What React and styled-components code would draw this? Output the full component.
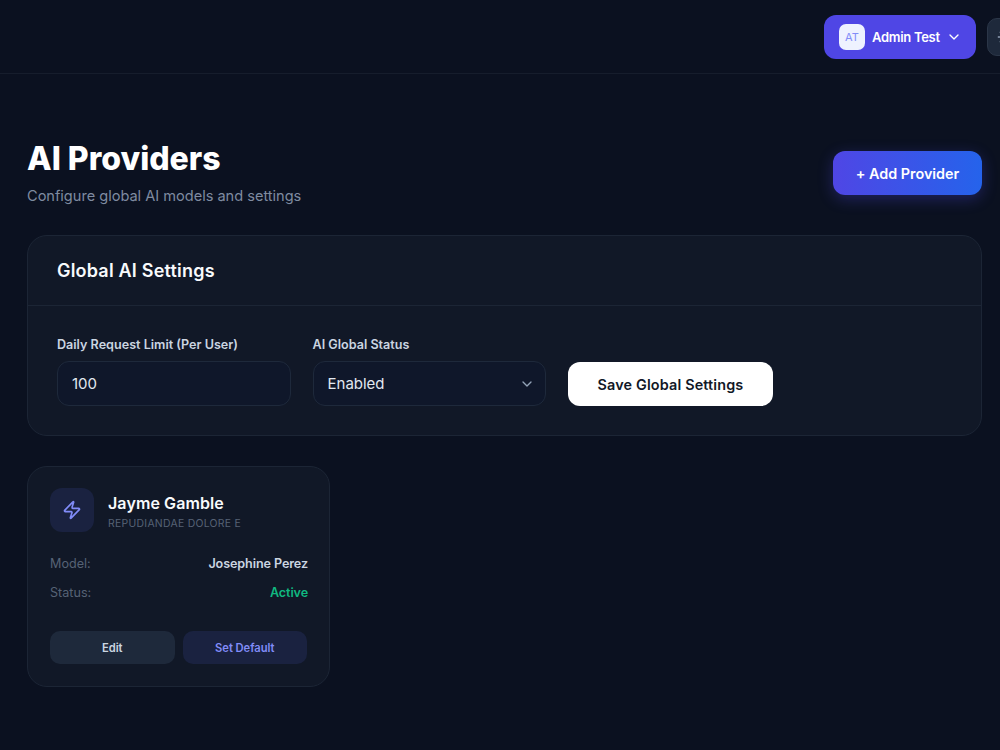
import React from "react";
import styled, { createGlobalStyle } from "styled-components";
import { ChevronDown, Zap, Sun } from "lucide-react";

const Global = createGlobalStyle`
  html, body { margin: 0; padding: 0; height: 750px; overflow: hidden; background: #0b1120; }
  * { box-sizing: border-box; }
  body { font-family: Inter, "Open Sans", "Liberation Sans", sans-serif; color: #fff; }
`;

const Page = styled.div`
  width: 1000px;
  height: 750px;
  overflow: hidden;
`;

const TopBar = styled.header`
  height: 74px;
  border-bottom: 1px solid #161d2c;
  display: flex;
  align-items: center;
  justify-content: flex-end;
  gap: 11px;
  margin-right: -40px;
`;

const UserButton = styled.button`
  width: 152px;
  height: 44px;
  background: #4f46e5;
  border: 0;
  border-radius: 12px;
  display: flex;
  align-items: center;
  padding: 0 15px;
  color: #fff;
  font: 600 13px Inter, sans-serif;
  letter-spacing: -0.3px;
  white-space: nowrap;
`;

const Avatar = styled.span`
  width: 26px;
  height: 26px;
  border-radius: 7px;
  background: #eef2ff;
  color: #818cf8;
  font-size: 11px;
  font-weight: 400;
  letter-spacing: 0;
  display: grid;
  place-items: center;
  margin-right: 7px;
  flex: none;
`;

const UserChevron = styled(ChevronDown)`
  margin-left: 6px;
  flex: none;
`;

const IconButton = styled.button`
  width: 53px;
  height: 38px;
  flex: none;
  background: #1e293b;
  border: 1px solid #2b3648;
  border-radius: 10px;
  color: #94a3b8;
  padding: 0 0 0 9px;
  display: flex;
  align-items: center;
`;

const Main = styled.main`
  padding: 62px 18px 0 27px;
`;

const Head = styled.div`
  display: flex;
  justify-content: space-between;
  align-items: flex-start;
  margin-bottom: 28px;
`;

const Title = styled.h1`
  margin: 0;
  font-size: 32px;
  line-height: 46px;
  font-weight: 800;
  color: #fff;
  letter-spacing: 0;
`;

const Subtitle = styled.p`
  margin: 3px 0 0;
  font-size: 14.6px;
  line-height: 22px;
  color: #7f8ba0;
  letter-spacing: -0.02px;
`;

const AddButton = styled.button`
  margin-top: 15px;
  width: 149px;
  height: 44px;
  border: 0;
  border-radius: 12px;
  background: linear-gradient(90deg, #4f46e5, #2563eb);
  box-shadow: 0 4px 15px rgba(79, 70, 229, 0.32);
  color: #fff;
  font: 600 14.4px Inter, sans-serif;
  letter-spacing: -0.03px;
`;

const Panel = styled.section`
  background: #111827;
  border: 1px solid #1c2535;
  border-radius: 20px;
`;

const PanelHeader = styled.div`
  height: 70px;
  padding: 0 29px;
  display: flex;
  align-items: center;
  border-bottom: 1px solid #1c2535;
`;

const PanelTitle = styled.h2`
  margin: 0;
  font-size: 18px;
  font-weight: 600;
  letter-spacing: 0.2px;
  color: #f8fafc;
`;

const Form = styled.div`
  padding: 29px 29px 29px;
  display: flex;
  align-items: flex-end;
  gap: 22px;
`;

const Field = styled.div`
  width: 233.5px;
`;

const Label = styled.label`
  display: block;
  font-size: 12.6px;
  line-height: 20px;
  font-weight: 600;
  color: #cbd5e1;
  letter-spacing: 0;
  margin-bottom: 6px;
`;

const InputBox = styled.div`
  height: 45px;
  background: #0f172a;
  border: 1px solid #1e293b;
  border-radius: 12px;
  padding: 0 14px;
  display: flex;
  align-items: center;
  justify-content: space-between;
  font-size: 15px;
  color: #e2e8f0;
`;

const SelectChevron = styled(ChevronDown)`
  color: #94a3b8;
  margin-right: -4px;
`;

const SaveButton = styled.button`
  width: 205px;
  height: 44px;
  border: 0;
  border-radius: 12px;
  background: #fff;
  color: #111827;
  font: 600 14.4px Inter, sans-serif;
  letter-spacing: 0.15px;
`;

const Card = styled.article`
  width: 303px;
  height: 221px;
  margin-top: 30px;
  background: #111827;
  border: 1px solid #1c2535;
  border-radius: 20px;
  padding: 21px 22px;
`;

const CardTop = styled.div`
  display: flex;
  align-items: center;
  gap: 14px;
  margin-bottom: 21px;
`;

const IconTile = styled.div`
  width: 44px;
  height: 44px;
  border-radius: 12px;
  background: #1a2240;
  display: grid;
  place-items: center;
  color: #818cf8;
`;

const NameBlock = styled.div`
  padding-top: 2px;
`;

const Name = styled.div`
  font-size: 16px;
  line-height: 24px;
  font-weight: 600;
  letter-spacing: 0.1px;
  color: #f8fafc;
`;

const Sub = styled.div`
  font-size: 10.4px;
  line-height: 17px;
  color: #566275;
  text-transform: uppercase;
  letter-spacing: 0.3px;
`;

const Row = styled.div`
  display: flex;
  justify-content: space-between;
  align-items: center;
  height: 21px;
  margin-bottom: 8px;
  font-size: 12.6px;
`;

const Key = styled.span`
  color: #566275;
`;

const Value = styled.span`
  font-weight: 600;
  letter-spacing: -0.1px;
  margin-right: -1px;
  color: ${(p) => p.$color || "#cbd5e1"};
`;

const Actions = styled.div`
  display: flex;
  gap: 8px;
  margin-top: 28px;
`;

const SmallButton = styled.button`
  flex: 1;
  height: 33px;
  border: 0;
  border-radius: 10px;
  background: ${(p) => (p.$accent ? "#1a2240" : "#1e293b")};
  color: ${(p) => (p.$accent ? "#818cf8" : "#cbd5e1")};
  font: 600 11.2px Inter, sans-serif;
  letter-spacing: -0.05px;
`;

export default function App() {
  return (
    <Page>
      <Global />
      <TopBar>
        <UserButton>
          <Avatar>AT</Avatar>
          Admin Test
          <UserChevron size={16} strokeWidth={2} />
        </UserButton>
        <IconButton aria-label="Theme"><Sun size={16} /></IconButton>
      </TopBar>
      <Main>
        <Head>
          <div>
            <Title>AI Providers</Title>
            <Subtitle>Configure global AI models and settings</Subtitle>
          </div>
          <AddButton>+ Add Provider</AddButton>
        </Head>
        <Panel>
          <PanelHeader><PanelTitle>Global AI Settings</PanelTitle></PanelHeader>
          <Form>
            <Field>
              <Label>Daily Request Limit (Per User)</Label>
              <InputBox>100</InputBox>
            </Field>
            <Field>
              <Label>AI Global Status</Label>
              <InputBox>Enabled<SelectChevron size={16} /></InputBox>
            </Field>
            <SaveButton>Save Global Settings</SaveButton>
          </Form>
        </Panel>
        <Card>
          <CardTop>
            <IconTile><Zap size={20} /></IconTile>
            <NameBlock>
              <Name>Jayme Gamble</Name>
              <Sub>Repudiandae dolore e</Sub>
            </NameBlock>
          </CardTop>
          <Row><Key>Model:</Key><Value>Josephine Perez</Value></Row>
          <Row><Key>Status:</Key><Value $color="#10b981">Active</Value></Row>
          <Actions>
            <SmallButton>Edit</SmallButton>
            <SmallButton $accent>Set Default</SmallButton>
          </Actions>
        </Card>
      </Main>
    </Page>
  );
}
